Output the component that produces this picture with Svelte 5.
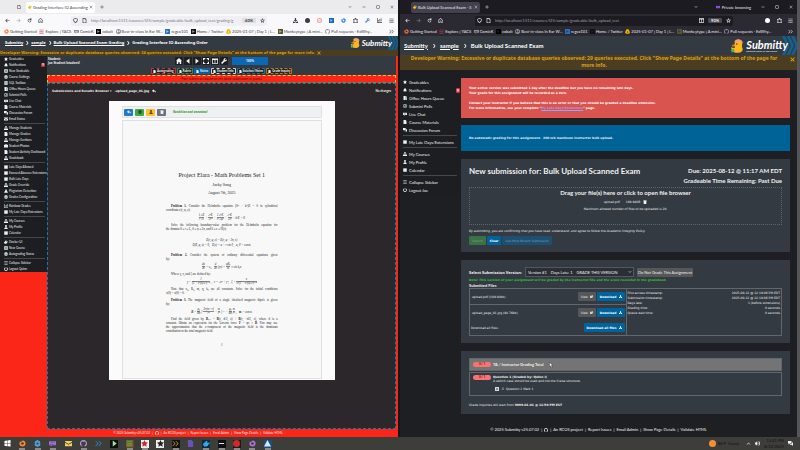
<script>
  const bookmarks = [
    { label: 'Getting Started', icon: 'fox', color: '#ff7139' },
    { label: 'Explore | YACS', icon: 'bars', color: '#c33a4a' },
    { label: 'ComicK', icon: 'chat', color: '#8a8f98' },
    { label: 'cobalt', icon: 'square', color: '#000000' },
    { label: 'Best-in-class In Ear W…', icon: 'globe', color: '#8a8f98' },
    { label: 'regex101', icon: 'square', color: '#2271c8' },
    { label: 'Home / Twitter', icon: 'square', color: '#111111' },
    { label: '2025-01-07 | Day 1 | L…', icon: 'drive', color: '#f4b400' },
    { label: 'Monkeytype | A mini…', icon: 'square', color: '#5b5330' },
    { label: 'Pull requests · ExWhy…', icon: 'github', color: '#8a8f98' }
  ];

  const graderMenu = [
    [
      ['star', 'Gradeables'],
      ['bell', 'Notifications', '9'],
      ['plus', 'New Gradeable'],
      ['gear', 'Course Settings'],
      ['db', 'SQL Toolbox'],
      ['door', 'Office Hours Queue'],
      ['poll', 'Submini Polls'],
      ['chat', 'Live Chat'],
      ['file', 'Course Materials'],
      ['comments', 'Discussion Forum'],
      ['mail', 'Email Status']
    ],
    [
      ['users', 'Manage Students'],
      ['file', 'Manage Graders'],
      ['users', 'Manage Sections'],
      ['camera', 'Student Photos'],
      ['file', 'Student Activity Dashboard'],
      ['users', 'Gradebook']
    ],
    [
      ['calendar', 'Late Days Allowed'],
      ['calendar', 'Excused Absence Extensions'],
      ['calendar', 'Bulk Late Days'],
      ['users', 'Grade Override'],
      ['warn', 'Plagiarism Detection'],
      ['gear', 'Grades Configuration']
    ],
    [
      ['chart', 'Rainbow Grades'],
      ['calendar', 'My Late Days/Extensions']
    ],
    [
      ['users', 'My Courses'],
      ['user', 'My Profile'],
      ['calendar', 'Calendar']
    ],
    [
      ['docker', 'Docker UI'],
      ['plus', 'New Course'],
      ['gear', 'Autograding Status']
    ],
    [
      ['bars', 'Collapse Sidebar'],
      ['power', 'Logout Quinn']
    ]
  ];

  const studentMenu = [
    [
      ['star', 'Gradeables'],
      ['bell', 'Notifications', '9'],
      ['door', 'Office Hours Queue'],
      ['poll', 'Submini Polls'],
      ['chat', 'Live Chat'],
      ['file', 'Course Materials'],
      ['comments', 'Discussion Forum']
    ],
    [['calendar', 'My Late Days/Extensions']],
    [
      ['users', 'My Courses'],
      ['user', 'My Profile'],
      ['calendar', 'Calendar']
    ],
    [
      ['bars', 'Collapse Sidebar'],
      ['power', 'Logout Joe']
    ]
  ];

  const icons = {
    star: 'M8 0l2.4 5.2 5.6.7-4.1 3.9 1.1 5.7L8 12.7l-5 2.8 1.1-5.7L0 5.900l5.600-.7z',
    bell: 'M7 0h2v2c3 .6 4 3 4 6l2 4v1H1v-1l2-4c0-3 1-5.400 4-6zM6 14h4l-2 2z',
    plus: 'M1 1h14v14H1zM7 4v3H4v2h3v3h2V9h3V7H9V4z',
    gear: 'M6 0h4v3l3-1 2 4-2 2 2 2-2 4-3-1v3H6v-3l-3 1-2-4 2-2-2-2 2-4 3 1zM8 5.500a2.500 2.500 0 100 5 2.500 2.500 0 000-5z',
    db: 'M1 1h14v4H1zM1 6h14v4H1zM1 11h14v4H1z',
    door: 'M2 0h9v16H2zM12 2h3v14h-3z',
    poll: 'M8 0a8 8 0 100 16A8 8 0 008 0zM8 2a6 6 0 110 12A6 6 0 018 2zM5 7h2v5H5zM9 4h2v8H9z',
    chat: 'M0 3h16v9H8l-4 3v-3H0zM3 6v1h10V6zM3 9v1h7V9z',
    file: 'M2 0h8l4 4v12H2z',
    comments: 'M0 0h11v8H5l-3 3V8H0zM12 5h4v8h-1v3l-3-3H6v-3h6z',
    mail: 'M0 2h16v2L8 9 0 4zM0 6l8 5 8-5v8H0z',
    users: 'M8 0a3 3 0 100 7 3 3 0 000-7zM3 6a2 2 0 100 4zM13 6v4a2 2 0 000-4zM0 11h4l4-3 4 3h4v5H0z',
    user: 'M8 0a4 4 0 100 8 4 4 0 000-8zM1 16c0-9 14-9 14 0z',
    camera: 'M0 3h4l2-2h4l2 2h4v11H0z',
    calendar: 'M3 0h2v2h6V0h2v2h2v13H1V2h2z',
    warn: 'M8 0l8 15H0z',
    chart: 'M0 0h2v13h14v2H0zM4 6h2v5H4zM8 3h2v8H8zM12 1h2v10h-2z',
    docker: 'M0 8h3V5h3V2h4v5h2l2-2 2 2c-1 2-2 2-3 2-1 4-4 6-7 6-4 0-6-2-6-7z',
    bars: 'M1 2h14v2H1zM1 7h14v2H1zM1 12h14v2H1z',
    power: 'M7 0h2v7H7zM4 2l1 2a5 5 0 106 0l1-2a7.500 7.500 0 11-8 0z',
    fox: 'M8 1c5 0 7 3 7 7s-3 7-7 7-7-3-7-7l1-5 2 2zM8 5a3 3 0 100 6 3 3 0 000-6z',
    square: 'M0 0h16v16H0zM5 4v8h2V9h4V7H7V4z',
    globe: 'M8 0a8 8 0 100 16A8 8 0 008 0zM3 4l4 1 1 3-2 4-3-3zM10 3l3 3-1 4-2-2z',
    drive: 'M5 1h6l5 9-3 5H3l-3-5zM8 6l-2.500 5h5z',
    github: 'M8 0a8 8 0 00-2.500 15.600v-2c-3 .4-3-2-3-2l2 1 1-1c-4-1-3-5-2-6V3l2.500 1h4L12.500 3v2.600c1 1 2 5-2 6v4A8 8 0 008 0z',
    back: 'M7 2l1.500 1.500L5 7h10v2H5l3.500 3.500L7 14 1 8z',
    forward: 'M9 2L7.500 3.500 11 7H1v2h10l-3.500 3.500L9 14l6-6z',
    reload: 'M8 2l3 1V1h3v6H8V5h2a4 4 0 102 4h2A6 6 0 118 2z',
    house: 'M8 0l8 7h-2v9h-4v-5H6v5H2V7H0z',
    houseLine: 'M8 0l7 6v9H9v-5H7v5H1V6zM8 2.500L2.700 7v6.300H5.500V8.500h5v4.800h2.800V7z',
    shield: 'M8 0l7 3c0 6-1 10-7 13C2 13 1 9 1 3zM8 2.200L3 4.300c.2 4 1 7 5 9.400 4-2.400 4.800-5.400 5-9.400z',
    page: 'M2 0h8l4 4v12H2zM4 2v12h8V5H9V2z',
    starLine: 'M8 0l2.400 5.200 5.600.7-4.100 3.900 1.100 5.700L8 12.700l-5 2.800 1.100-5.700L0 5.900l5.600-.7zM8 4L6.700 6.900l-3 .3L6 9.300l-.6 3L8 10.700l2.600 1.600-.6-3 2.300-2.100-3-.3z',
    down: 'M2 5l6 6 6-6-1-1-5 5-5-5z',
    up: 'M2 11l6-6 6 6-1 1-5-5-5 5z',
    angle: 'M4 0h4l6 8-6 8H4l6-8z',
    close: 'M2 3l1-1 5 5 5-5 1 1-5 5 5 5-1 1-5-5-5 5-1-1 5-5z',
    cross: 'M1 3l2-2 5 5 5-5 2 2-5 5 5 5-2 2-5-5-5 5-2-2 5-5z',
    max: 'M2 2h12v12H2zM4 4v8h8V4z',
    min: 'M2 7h12v2H2z',
    add: 'M7 1h2v6h6v2H9v6H7V9H1V7h6z',
    prev: 'M12 1v14L3 8z',
    next: 'M4 1v14l9-7z',
    expand: 'M0 0h6v3H3v3H0zM10 0h6v6h-3V3h-3zM0 10h3v3h3v3H0zM13 10h3v6h-6v-3h3z',
    table: 'M0 1h16v14H0zM2 5v8h5V5zM9 5v8h5V5z',
    wrench: 'M15 3l-3 3-2-2 3-3c-4-2-7 1-6 5L0 13l3 3 7-7c4 1 7-2 5-6z',
    reply: 'M7 1v4c6 0 9 4 8 10-2-4-4-5-8-5v4L0 7z',
    download: 'M6 0h4v6h4l-6 6-6-6h4zM0 11h3l5 4 5-4h3v5H0z',
    view: 'M4 1h12v8h-3v5H0V6h4zM6 3v3h7V3z',
    trash: 'M1 1h4l1-1h4l1 1h4v2H1zM2 4h12l-1 12H3z',
    puzzle: 'M5 3a3 3 0 016 0h4v4a3 3 0 000 5v4H1v-4a3 3 0 000-5V3zM4 5v9h8V5z',
    dot: 'M8 0a8 8 0 100 16A8 8 0 008 0z',
    mask: 'M0 3l8 2 8-2c0 7-1 11-5 11L8 11l-3 3C1 14 0 10 0 3zM3 7l2 3 2-2zM13 7l-2 3-2-2z',
    more: 'M1 3l1-1 6 6-6 6-1-1 5-5zM8 3l1-1 6 6-6 6-1-1 5-5z',
    win: 'M1 2l6-1v6H1zM8 1l7-1v7H8zM1 8h6v6l-6-1zM8 8h7v7l-7-1z',
    sound: 'M0 5h3l4-4v14l-4-4H0zM9 4c3 1 3 7 0 8zM12 1c6 3 6 11 0 14l-1-1c4-3 4-9 0-12z'
  };

  const taskIcons = [
    { icon: 'win', fg: '#ffffff' },
    { icon: 'fox', fg: '#ff8a2a', open: true },
    { icon: 'gear', fg: '#4aa3e0', open: true },
    { icon: 'chat', fg: '#a06be0', open: true },
    { icon: 'mail', fg: '#f3cf5b' },
    { icon: 'github', fg: '#b891e8', open: true },
    { icon: 'more', fg: '#2b9ae6' },
    { icon: 'next', fg: '#9be59b', bg: '#0d0f0d' },
    { icon: 'db', fg: '#6f8f35', bg: '#6b4427', open: true },
    { icon: 'star', fg: '#c22c2c', bg: '#eeeeee', open: true },
    { icon: 'star', fg: '#222222', bg: '#eeeeee' },
    { icon: 'more', fg: '#e8a52c', bg: '#111111', open: true },
    { icon: 'file', fg: '#6a51b5' },
    { icon: 'docker', fg: '#33aaf0', bg: '#10293f', open: true },
    { icon: 'min', fg: '#ffffff', bg: '#101010', open: true },
    { icon: 'dot', fg: '#d32626', bg: '#1b1b1b', open: true },
    { icon: 'fox', fg: '#b56fe0', open: true },
    { icon: 'warn', fg: '#d6ecff', bg: '#1b4c86', open: true }
  ];

  const graderTabs = [
    ['Autograding', 'red'],
    ['Rubric', 'green'],
    ['Notes', 'fill'],
    ['Student Info', 'white'],
    ['Solution/Notes', 'blue'],
    ['Grade Inquiry', 'orange']
  ];

  const details = [
    ['First access timestamp:', '2025-08-12 @ 12:19:06 PM EDT'],
    ['Submission timestamp:', '2025-08-12 @ 12:19:06 PM EDT'],
    ['Days late:', '1 (before extensions)'],
    ['Grading time:', '0 seconds'],
    ['Queue wait time:', '0 seconds']
  ];

  const footerLinks = ['An RCOS project', 'Report Issues', 'Email Admin', 'Show Page Details', 'Validate HTML'];
</script>

{#snippet icon(name, color = 'currentColor')}
  <svg class="icon" viewBox="0 0 16 16" aria-hidden="true">
    <path d={icons[name]} fill={color} fill-rule="evenodd" />
  </svg>
{/snippet}

{#snippet browser(title, url, zoom, isPrivate)}
  <header class="browser">
    <div class="tabs">
      {#if !isPrivate}
        <span class="pinned">{@render icon('page')}</span>
      {/if}
      <button class="tab">
        {@render icon('docker', '#fdb515')}
        <span class="tab-title">{title}</span>
        {@render icon('close')}
      </button>
      <button class="plain" aria-label="New tab">{@render icon('add')}</button>
      <div class="window-controls">
        <button class="plain" aria-label="List tabs">{@render icon('down')}</button>
        {#if isPrivate}
          <span class="private">{@render icon('mask', '#a05cff')} Private browsing</span>
        {/if}
        <button class="plain" aria-label="Minimize">{@render icon('min')}</button>
        <button class="plain" aria-label="Maximize">{@render icon('max')}</button>
        <button class="plain" aria-label="Close">{@render icon('close')}</button>
      </div>
    </div>
    <div class="toolbar">
      <div class="nav-buttons">
        <button class="plain" aria-label="Back">{@render icon('back')}</button>
        <button class="plain faded" aria-label="Forward">{@render icon('forward')}</button>
        <button class="plain" aria-label="Reload">{@render icon('reload')}</button>
        <button class="plain" aria-label="Home">{@render icon('houseLine')}</button>
      </div>
      <div class="url-bar">
        {@render icon('shield')}
        {@render icon('page')}
        <input type="text" aria-label="Address" value={url} />
        {#if isPrivate}{@render icon('table')}{/if}
        <span class="zoom">{zoom}</span>
        {@render icon('starLine')}
      </div>
      <div class="extensions">
        {#if isPrivate}
          {@render icon('dot', '#ffffff')}
          {@render icon('puzzle')}
        {:else}
          {@render icon('download')}
          {@render icon('dot', '#3c3c44')}
          {@render icon('poll', '#f08a8a')}
          {@render icon('square', '#1769c5')}
          {@render icon('fox', '#2580d8')}
          {@render icon('puzzle')}
          {@render icon('wrench', '#4b86d8')}
          {@render icon('chart')}
        {/if}
        {@render icon('bars')}
      </div>
    </div>
    <nav class="bookmarks">
      {#each bookmarks as mark}
        <a href="#bookmark">{@render icon(mark.icon, mark.color)}{mark.label}</a>
      {/each}
      <span class="overflow">{@render icon('more')}</span>
    </nav>
  </header>
{/snippet}

{#snippet logo()}
  <div class="logo">
    <svg class="duck" viewBox="0 0 44 44" aria-hidden="true">
      <path d="M14 14a11 11 0 0122 1c0 5-1 6-1 9 6 9 0 18-12 18C9 42 3 36 4 25c4 3 8 4 11 1-2-4-3-8-1-12z" fill="#fdb71a" />
      <path d="M12 11C16 0 32-2 39 13c-7-3-17-5-27-2z" fill="#f39a93" />
      <path d="M14 17l-8 2c-2 4 3 6 9 4z" fill="#f27a1a" />
      <circle cx="20" cy="16" r="2" fill="#222222" />
      <path d="M2 34l8-4 4 6-8 6z" fill="#2eb574" />
    </svg>
    <span class="wordmark">Submitty<small>Rensselaer Center for Open Source</small></span>
    <svg class="chevrons" viewBox="0 0 30 40" preserveAspectRatio="none" aria-hidden="true">
      <path d="M0 0h6l9 20-9 20H0l9-20zM9 0h6l9 20-9 20H9l9-20zM18 0h6l6 14v12l-6 14h-6l9-20z" fill="#12618f" />
    </svg>
  </div>
{/snippet}

{#snippet sidebar(groups)}
  <nav class="sidebar">
    {#each groups as group}
      <ul>
        {#each group as [name, label, badge]}
          <li>
            <a href="#menu">{@render icon(name)}{label}</a>
            {#if badge}<span class="badge">{badge}</span>{/if}
          </li>
        {/each}
      </ul>
    {/each}
  </nav>
{/snippet}

{#snippet footer()}
  <footer class="site-footer">
    <span>© 2025 Submitty v25.07.02</span><i>|</i>
    {@render icon('github')}
    {#each footerLinks as link}
      <i>|</i><a href="#footer">{link}</a>
    {/each}
  </footer>
{/snippet}

{#snippet frac(top, bottom)}
  <span class="frac"><span>{top}</span><span>{bottom}</span></span>
{/snippet}

<div class="desktop">
  <section class="window grader">
    {@render browser('Grading Interface IO Ascending', 'http://localhost:1511/courses/f25/sample/gradeable/bulk_upload_test/grading/g', '60%', false)}
    <div class="site-header">
      <nav class="crumbs">
        <a href="#home">Submitty</a>{@render icon('angle')}
        <a href="#course">sample</a>{@render icon('angle')}
        <a href="#exam">Bulk Upload Scanned Exam Grading</a>{@render icon('angle')}
        <span>Grading Interface IO Ascending Order</span>
      </nav>
      {@render logo()}
    </div>
    <div class="warning">
      <p>Developer Warning: Excessive or duplicate database queries observed: 34 queries executed. Click "Show Page Details" at the bottom of the page for more info.</p>
      {@render icon('cross')}
    </div>
    <div class="site-body">
      {@render sidebar(graderMenu)}
      <main class="grading">
        <div class="grading-top">
          <p class="student">Student:<br />Joe Student [student]</p>
          <div class="grading-tools">
            <div class="tool-row">
              {#each ['house', 'prev', 'next', 'expand', 'table', 'wrench'] as name}
                <button class="tool" aria-label={name}>{@render icon(name)}</button>
              {/each}
              <div class="progress">100%</div>
            </div>
            <div class="tab-row">
              {#each graderTabs as [label, tone]}
                <button class="pill {tone}">{@render icon('file')}{label}</button>
              {/each}
            </div>
          </div>
        </div>
        <div class="notice">Peer rubrics are based on the latest submission or points</div>
        <div class="browser-panel">
          <div class="panel-title">
            <strong>Submissions and Results Browser ▾</strong>
            <strong class="filename">.upload_page_01.jpg</strong>
            {@render icon('reply')}
            <small>No changes</small>
          </div>
          <div class="viewer">
            <div class="viewer-bar">
              <button class="act blue" aria-label="Save">{@render icon('reply')}</button>
              <button class="act green" aria-label="Rotate">{@render icon('gear')}</button>
              <button class="act yellow" aria-label="Pen">{@render icon('user')}</button>
              <button class="act gray" aria-label="Clear">{@render icon('trash')}</button>
              <em>Rendition and annotate!</em>
            </div>
            <article class="paper">
              <h1>Project Elara - Math Problems Set 1</h1>
              <p class="byline">Jacky Song</p>
              <p class="byline">August 7th, 2025</p>

              <div class="para">
                <p class="full indent"><b>Problem 1.</b> Consider the Helmholtz equation (∇² + k²)E = 0 in cylindrical</p>
                <p>coordinates (r, φ, z):</p>
              </div>
              <div class="math">
                {@render frac('1 ∂E', 'r ∂r')} + {@render frac('∂²E', '∂r²')} + {@render frac('1 ∂²E', 'r² ∂φ²')} + {@render frac('∂²E', '∂z²')} + k²E = 0
              </div>
              <div class="para">
                <p class="full indent">Solve the following boundary-value problem for the Helmholtz equation for</p>
                <p>the domain 0 ≤ r ≤ L, 0 ≤ φ ≤ 2π, and 0 ≤ z ≤ H(r):</p>
              </div>
              <div class="math two-line">
                <p>E(r, φ, z) = E(r, φ + 2π, z)</p>
                <p>E(R, φ, z) = 0,&nbsp;&nbsp; E(z) = a + r sin θ,&nbsp;&nbsp; a, θ = const.</p>
              </div>
              <div class="para">
                <p class="full indent"><b>Problem 2.</b> Consider the system of ordinary differential equations given</p>
                <p>by:</p>
              </div>
              <div class="math">
                {@render frac('dx', 'dt')} = v₀,&nbsp;&nbsp; {@render frac('d', 'dt')}(γv) = {@render frac('qB₀', 'm')} v sin k₀x
              </div>
              <div class="para">
                <p class="indent">Where γ, v, and ξ are defined by:</p>
              </div>
              <div class="math">
                γ = {@render frac('1', '(1 − v²(t)/c²)¹ᐟ²')} ,&nbsp;&nbsp; v = √x² + y²,&nbsp;&nbsp; ξ = {@render frac('x', 'c²(1 − v²(t)/c²)³ᐟ²')}
              </div>
              <div class="para">
                <p class="full indent">Note that v₀, B₀, m, q, k₀ are all constants. Solve for the initial conditions</p>
                <p>x(0) = z(0) = 0.</p>
              </div>
              <div class="para spaced">
                <p class="full indent"><b>Problem 3.</b> The magnetic field of a single idealized magnetic dipole is given</p>
                <p>by:</p>
              </div>
              <div class="math">
                <b>B</b> = {@render frac('μ₀', '4π')} [ {@render frac('3r(m · r)', 'r⁵')} − {@render frac('m', 'r³')} ] = −{@render frac('μ₀', '4π')} {@render frac('m', 'r³')} ,&nbsp;&nbsp; <b>m</b> = const.
              </div>
              <div class="para">
                <p class="full indent">Find the field given by <b>B</b>ₙₑₜ = <b>B</b>(r, d/2, z) + <b>B</b>(r, −d/2, z), where d is a</p>
                <p class="full">constant. Obtain an expression for the Lorentz force <b>F</b> = qv × <b>B</b>. You may use</p>
                <p class="full">the approximation that the z-component of the magnetic field is the dominant</p>
                <p>contribution to the total magnetic field.</p>
              </div>
              <p class="page-number">1</p>
            </article>
          </div>
        </div>
        {@render footer()}
      </main>
    </div>
  </section>

  <section class="window student-view">
    {@render browser('Bulk Upload Scanned Exam - S', 'http://localhost:1511/courses/f25/sample/gradeable/bulk_upload_test', '90%', true)}
    <div class="site-header">
      <nav class="crumbs">
        <a href="#home">Submitty</a>{@render icon('angle')}
        <a href="#course">sample</a>{@render icon('angle')}
        <span>Bulk Upload Scanned Exam</span>
      </nav>
      {@render logo()}
    </div>
    <div class="warning">
      <p>Developer Warning: Excessive or duplicate database queries observed: 29 queries executed. Click "Show Page Details" at the bottom of the page for more info.</p>
      {@render icon('cross')}
    </div>
    <div class="site-body">
      {@render sidebar(studentMenu)}
      <main class="submission">
        <div class="alert danger">
          <p>Your active version was submitted 1 day after the deadline but you have no remaining late days.</p>
          <p>Your grade for this assignment will be recorded as a zero.</p>
          <p class="gap">Contact your instructor if you believe that this is an error or that you should be granted a deadline extension.</p>
          <p>For more information, see your complete "<a href="#late">My Late Days/Extensions</a>" page.</p>
        </div>
        <div class="alert info">
          <p>No automatic grading for this assignment.&nbsp; 200 mb maximum instructor bulk upload.</p>
        </div>

        <section class="card upload">
          <div class="upload-head">
            <h1>New submission for: Bulk Upload Scanned Exam</h1>
            <div class="due">
              <p>Due: 2025-08-12 @ 11:17 AM EDT</p>
              <p>Gradeable Time Remaining: Past Due</p>
            </div>
          </div>
          <div class="dropzone">
            <h2>Drag your file(s) here or click to open file browser</h2>
            <p class="file"><span>upload.pdf</span><span>109.94KB</span>{@render icon('trash')}</p>
            <p>Maximum allowed number of files to be uploaded is 20.</p>
          </div>
          <p class="agree">By submitting, you are confirming that you have read, understand, and agree to follow the Academic Integrity Policy.</p>
          <div class="actions">
            <button class="btn success">Submit</button>
            <button class="btn primary">Clear</button>
            <button class="btn dim">Use Most Recent Submission</button>
          </div>
        </section>

        <section class="card version">
          <div class="version-row">
            <label for="version">Select Submission Version:</label>
            <div class="select">
              <select id="version">
                <option>Version #1 &nbsp;&nbsp; Days Late: 1 &nbsp;&nbsp; GRADE THIS VERSION</option>
              </select>
              {@render icon('down')}
            </div>
            <button class="btn secondary">Do Not Grade This Assignment</button>
          </div>
          <p class="note">Note: This version of your assignment will be graded by the instructor/TAs and the score recorded in the gradebook.</p>
          <h3>Submitted Files</h3>
          <div class="files">
            <div class="file-list">
              <div class="file-row">
                <span>.upload.pdf (109.94kb)</span>
                <button class="btn secondary">View {@render icon('view')}</button>
                <button class="btn primary">Download {@render icon('download')}</button>
              </div>
              <div class="file-row">
                <span>.upload_page_01.jpg (94.76kb)</span>
                <button class="btn secondary">View {@render icon('view')}</button>
                <button class="btn primary">Download {@render icon('download')}</button>
              </div>
              <div class="file-row">
                <span>Download all files:</span>
                <button class="btn primary">Download all files {@render icon('download')}</button>
              </div>
            </div>
            <dl>
              {#each details as [term, value]}
                <div><dt>{term}</dt><dd>{value}</dd></div>
              {/each}
            </dl>
          </div>
        </section>

        <section class="card grades">
          <div class="total">
            <span class="score">0 / 1</span>
            <strong>TA / Instructor Grading Total</strong>
            <svg class="cursor" viewBox="0 0 10 16" aria-hidden="true">
              <path d="M1 1v12l3-3 2 5 2-1-2-5h4z" fill="#ffffff" stroke="#222222" />
            </svg>
          </div>
          <div class="question">
            <span class="score">0 / 1</span>
            <div>
              <strong>Question 1 (Graded by: Quinn I)</strong>
              <p>A switch case should be used and not the if-else structure.</p>
              <label class="mark"><input type="checkbox" checked /> -5&nbsp; Question 1 Mark 1</label>
            </div>
          </div>
          <p class="inquiry">Grade inquiries will start from <b>9999-01-01 @ 11:59 PM EST</b></p>
        </section>
        {@render footer()}
      </main>
    </div>
  </section>

  <footer class="taskbar">
    <div class="apps">
      {#each taskIcons as app}
        <button class="app" class:open={app.open} style:background={app.bg} aria-label="Application">
          {@render icon(app.icon, app.fg)}
        </button>
      {/each}
    </div>
    <div class="tray">
      <span class="weather">{@render icon('dot', '#f5912c')} 86°F&nbsp; Sunny</span>
      {@render icon('up')}
      {@render icon('sound')}
      <time>12:21 PM<br />8/12/2025</time>
      {@render icon('comments')}
    </div>
  </footer>
</div>

<style>
  :global(body) {
    background: #1d1e22;
  }

  .desktop {
    display: grid;
    grid-template-columns: 398fr 402fr;
    grid-template-rows: minmax(0, 1fr) auto;
    height: 100vh;
    overflow: hidden;
    font: 3px/4px 'Noto Sans', sans-serif;
    color: #f0f0f0;
  }

  p,
  h1,
  h2,
  h3,
  ul,
  dl,
  dd {
    margin: 0;
    padding: 0;
    list-style: none;
  }

  button,
  input,
  select {
    box-sizing: border-box;
    margin: 0;
    padding: 0;
    border: 0;
    font: inherit;
    color: inherit;
    background: none;
  }

  a {
    color: inherit;
    text-decoration: none;
  }

  .icon {
    flex: none;
    width: 4px;
    height: 4px;
  }

  .window {
    display: flex;
    flex-direction: column;
    min-width: 0;
    min-height: 0;
    overflow: hidden;
  }

  .student-view {
    border-left: 2px solid #17171a;
    border-right: 3px solid #55565a;
    background: #1d1f23;
  }

  /* browser chrome */
  .browser {
    flex: none;
    font: 4px/5px Lato, sans-serif;
    color: #3c3c44;
    background: #f9f9fb;
  }

  .tabs {
    display: flex;
    align-items: center;
    gap: 5px;
    height: 14px;
    padding: 0 4px 0 17px;
    background: #ebebee;
  }

  .student-view .tabs {
    padding-left: 11px;
  }

  .pinned {
    display: flex;
  }

  .tab {
    display: flex;
    align-items: center;
    gap: 1px;
    min-width: 69px;
    height: 11px;
    padding: 0 2px;
    border-radius: 2px;
    background: #ffffff;
  }

  .tab-title {
    flex: 1;
    white-space: nowrap;
    text-align: left;
  }

  .plain {
    display: flex;
  }

  .window-controls {
    display: flex;
    align-items: center;
    gap: 10px;
    margin-left: auto;
  }

  .private {
    display: flex;
    align-items: center;
    gap: 2px;
    margin-left: 8px;
    white-space: nowrap;
  }

  .toolbar {
    display: flex;
    align-items: center;
    height: 13px;
    padding: 0 4px 0 5px;
  }

  .toolbar .icon {
    width: 5px;
    height: 5px;
  }

  .nav-buttons {
    display: flex;
    gap: 6px;
    width: 66px;
  }

  .student-view .nav-buttons {
    width: 70px;
  }

  .faded {
    opacity: 0.4;
  }

  .url-bar {
    display: flex;
    align-items: center;
    gap: 4px;
    flex: 1;
    min-width: 0;
    height: 10px;
    padding: 0 2px;
    border-radius: 2px;
    background: #f0f0f4;
  }

  .url-bar input {
    flex: 1;
    min-width: 0;
    height: 8px;
    color: #77777f;
  }

  .student-view .url-bar input {
    color: #a0a0a8;
  }

  .zoom {
    padding: 0 3px;
    border-radius: 1px;
    font-weight: bold;
    background: #dedee3;
  }

  .extensions {
    display: flex;
    justify-content: space-between;
    align-items: center;
    width: 101px;
    margin-left: 26px;
  }

  .student-view .extensions {
    width: 28px;
    margin-left: 32px;
  }

  .bookmarks {
    display: flex;
    align-items: center;
    justify-content: space-between;
    height: 9px;
    padding: 0 4px;
    white-space: nowrap;
  }

  .bookmarks a {
    display: flex;
    align-items: center;
    gap: 1px;
  }

  .bookmarks .icon {
    width: 5px;
    height: 5px;
  }

  .overflow {
    display: flex;
    margin-left: 14px;
  }

  .student-view .browser {
    color: #e8e8ec;
    background: #2b2a33;
  }

  .student-view .tabs {
    background: #1c1b22;
  }

  .student-view .tab {
    background: #42414d;
  }

  .student-view .url-bar {
    background: #1c1b22;
  }

  .student-view .zoom {
    background: #4a4954;
  }

  /* submitty header */
  .site-header {
    display: flex;
    flex: none;
    align-items: center;
    justify-content: space-between;
    height: 14px;
    padding-left: 5px;
    font: bold 4px/6px 'Noto Sans', sans-serif;
    color: #ffffff;
    background: #343a42;
  }

  .student-view .site-header {
    height: 19px;
    padding-left: 4px;
    font: bold 6px/8px Lato, sans-serif;
  }

  .crumbs {
    display: flex;
    align-items: center;
    gap: 2px;
    white-space: nowrap;
  }

  .student-view .crumbs {
    gap: 4px;
  }

  .crumbs a {
    text-decoration: underline;
  }

  .logo {
    position: relative;
    display: flex;
    align-items: center;
    gap: 1px;
    height: 100%;
    padding-right: 6px;
  }

  .duck {
    width: 11px;
    height: 12px;
  }

  .wordmark {
    position: relative;
    z-index: 1;
    font: italic bold 8px/9px Lato, sans-serif;
  }

  .wordmark small {
    display: none;
    font: 2px/2px Lato, sans-serif;
  }

  .chevrons {
    position: absolute;
    top: 0;
    right: 0;
    width: 10px;
    height: 100%;
  }

  .student-view .logo {
    padding-right: 9px;
  }

  .student-view .duck {
    width: 15px;
    height: 16px;
  }

  .student-view .wordmark {
    font-size: 11px;
    line-height: 11px;
  }

  .student-view .wordmark small {
    display: block;
  }

  .student-view .chevrons {
    width: 15px;
  }

  .warning {
    display: flex;
    flex: none;
    align-items: center;
    gap: 2px;
    height: 6px;
    font: bold 4px/6px 'Noto Sans', sans-serif;
    color: #d9a01e;
    background: #4b3d22;
    white-space: nowrap;
  }

  .student-view .warning {
    align-items: flex-start;
    height: 15px;
    padding-right: 2px;
    font-size: 5px;
    line-height: 7px;
    text-align: center;
    white-space: normal;
  }

  .student-view .warning p {
    flex: 1;
    padding: 0 8px;
  }

  .student-view .warning .icon {
    width: 5px;
    height: 5px;
    margin-top: 2px;
  }

  .site-body {
    display: flex;
    flex: 1;
    min-height: 0;
  }

  /* sidebar */
  .sidebar {
    flex: none;
    align-self: flex-start;
    box-sizing: border-box;
    width: 47px;
    padding: 0 2px 0 4px;
    font: 3px/4px Lato, sans-serif;
    background: #1c1e22;
  }

  .sidebar ul + ul {
    margin-top: 1px;
    padding-top: 1px;
    border-top: 1px solid #45474b;
  }

  .sidebar li {
    display: flex;
    align-items: center;
    justify-content: space-between;
    height: 6px;
  }

  .sidebar a {
    display: flex;
    align-items: center;
    gap: 1px;
    white-space: nowrap;
  }

  .badge {
    padding: 0 1px;
    border-radius: 1px;
    font-weight: bold;
    background: #c9303e;
  }

  .student-view .sidebar {
    width: 60px;
    padding: 8px 0 0 3px;
    font: 4px/5px Lato, sans-serif;
  }

  .student-view .sidebar ul + ul {
    margin: 1px 3px 0 0;
    padding-top: 2px;
  }

  .student-view .sidebar li {
    height: 8px;
  }

  .student-view .sidebar a {
    gap: 2px;
  }

  /* grading interface */
  .grader {
    background: #fb2617;
  }

  .grading {
    display: flex;
    flex: 1;
    flex-direction: column;
    min-width: 0;
    padding-right: 2px;
  }

  .grading-top {
    display: flex;
    box-sizing: border-box;
    height: 19px;
    padding-top: 1px;
    background: #343a42;
  }

  .student {
    width: 103px;
    padding-left: 1px;
    font-weight: bold;
  }

  .grading-tools {
    display: flex;
    flex-direction: column;
    gap: 3px;
  }

  .tool-row {
    display: flex;
    gap: 1px;
    padding-left: 24px;
  }

  .tool {
    display: grid;
    place-items: center;
    width: 8px;
    height: 8px;
    border-radius: 1px;
    background: #1c1e22;
  }

  .tool .icon {
    width: 6px;
    height: 6px;
  }

  .progress {
    width: 36px;
    margin-left: 3px;
    font-weight: bold;
    line-height: 8px;
    text-align: center;
    background: #0a68b4;
  }

  .tab-row {
    display: flex;
    gap: 1px;
    font: bold 3px/4px Lato, sans-serif;
  }

  .pill {
    display: flex;
    align-items: center;
    gap: 1px;
    height: 6px;
    padding: 0 1px;
    border: 1px dashed;
    border-radius: 1px;
    white-space: nowrap;
    background: #22262b;
  }

  .pill .icon {
    width: 3px;
    height: 3px;
  }

  .pill.red {
    border-color: #c9303e;
  }

  .pill.green {
    border-color: #37864b;
  }

  .pill.fill {
    border-color: #0a68b4;
    background: #0a5a9a;
  }

  .pill.white {
    border-color: #d0d0d0;
  }

  .pill.blue {
    border-color: #1b6f8f;
  }

  .pill.orange {
    border-color: #b77416;
  }

  .notice {
    border: 1px dashed #e3c52c;
    border-bottom-color: #4d9f3c;
    line-height: 6px;
    text-align: center;
    color: #3c0a0a;
  }

  .browser-panel {
    flex: 1;
    min-height: 0;
    border: 1px dashed #167ab8;
    background: #2c272a;
  }

  .panel-title {
    display: flex;
    align-items: center;
    gap: 3px;
    height: 14px;
    padding: 0 4px 3px;
    font: bold 3px/4px 'DejaVu Sans', sans-serif;
  }

  .panel-title small {
    margin-left: auto;
    font: bold 3px/4px Lato, sans-serif;
  }

  .viewer {
    box-sizing: border-box;
    width: 65%;
    margin-left: 61px;
    padding: 5px 13px 1px;
    background: #fbfbfb;
  }

  .viewer-bar {
    display: flex;
    align-items: center;
    gap: 2px;
    height: 10px;
    margin-bottom: 2px;
    padding: 0 1px;
    border: 1px solid #e0e1e4;
    background: #eff0f2;
  }

  .act {
    display: grid;
    place-items: center;
    width: 9px;
    height: 7px;
    border-radius: 1px;
  }

  .act.blue {
    background: #1f7bc8;
  }

  .act.green {
    color: #143d18;
    background: #40a845;
  }

  .act.yellow {
    color: #6a3a10;
    background: #fdbf2d;
  }

  .act.gray {
    background: #6b747c;
  }

  .viewer-bar em {
    margin-left: 5px;
    font-weight: bold;
    color: #2f9a2f;
  }

  .paper {
    height: 257px;
    padding: 0 43px;
    border: 1px solid #dfe0e1;
    font: 3px/4px 'Liberation Serif', serif;
    color: #222222;
    background: #f8f8f8;
  }

  .paper h1 {
    margin: 50px 0 2px;
    font: 6px/8px 'Liberation Serif', serif;
    text-align: center;
    white-space: nowrap;
  }

  .byline {
    font-size: 4px;
    line-height: 8px;
    text-align: center;
  }

  .byline + .para {
    padding-top: 7px;
  }

  .para p {
    white-space: nowrap;
  }

  .para .full {
    text-align-last: justify;
  }

  .para .indent {
    padding-left: 5px;
  }

  .para.spaced {
    padding-top: 3px;
  }

  .math {
    display: flex;
    align-items: center;
    justify-content: center;
    gap: 1px;
    height: 11px;
    font-style: italic;
    white-space: nowrap;
  }

  .math.two-line {
    flex-direction: column;
    height: 22px;
  }

  .frac {
    display: inline-flex;
    flex-direction: column;
    line-height: 3px;
    text-align: center;
  }

  .frac span + span {
    border-top: 1px solid #8a8a8a;
  }

  .page-number {
    line-height: 24px;
    text-align: center;
  }

  /* centred on the whole window, so it reaches back under the sidebar */
  .site-footer {
    display: flex;
    align-items: center;
    justify-content: center;
    gap: 2px;
    height: 8px;
    margin-left: -47px;
    font: 3px/4px Lato, sans-serif;
    white-space: nowrap;
  }

  .site-footer i {
    font-style: normal;
  }

  /* submission page */
  .submission {
    display: flex;
    flex: 1;
    flex-direction: column;
    gap: 8px;
    min-width: 0;
    padding: 8px 7px 0 1px;
    font-family: 'DejaVu Sans', sans-serif;
  }

  .alert {
    padding: 8px;
    font-weight: bold;
    line-height: 5px;
    color: #ffffff;
  }

  .alert .gap {
    margin-top: 5px;
  }

  .danger {
    padding-bottom: 7px;
    margin-bottom: -1px;
    background: #d9534f;
  }

  .danger a {
    color: #9aa0f5;
    text-decoration: underline;
  }

  .info {
    padding: 11px 8px 10px;
    color: #e0eef8;
    background: #006398;
  }

  .card {
    padding: 7px 8px;
    background: #343a42;
  }

  .upload-head {
    display: flex;
    justify-content: space-between;
    height: 21px;
    font: bold 6px/10px Lato, sans-serif;
    white-space: nowrap;
  }

  .upload-head h1 {
    font-size: 8px;
    line-height: 10px;
  }

  .due {
    text-align: right;
  }

  .dropzone {
    height: 36px;
    border: 1px dotted #5f656d;
    text-align: center;
    line-height: 6px;
  }

  .dropzone h2 {
    font: bold 6px/10px Lato, sans-serif;
  }

  .dropzone .file {
    display: flex;
    align-items: center;
    justify-content: center;
    gap: 3px;
    line-height: 8px;
  }

  .file span + span {
    margin-left: 3px;
  }

  .agree {
    padding: 4px 0 3px;
    font-style: italic;
  }

  .actions {
    display: flex;
    gap: 1px;
  }

  .btn {
    display: flex;
    align-items: center;
    justify-content: center;
    gap: 2px;
    height: 9px;
    padding: 0 3px;
    border-radius: 1px;
    white-space: nowrap;
  }

  .success {
    color: #7fa382;
    background: #3c7045;
  }

  .primary {
    font-weight: bold;
    color: #ffffff;
    background: #00639e;
  }

  .dim {
    color: #7f9db3;
    background: #1d4f70;
  }

  .secondary {
    background: #555759;
  }

  .version-row {
    display: flex;
    align-items: center;
    gap: 3px;
    font: 4px/5px Lato, sans-serif;
  }

  .version-row label {
    font: bold 4px/5px 'Noto Sans', sans-serif;
  }

  .version-row .btn {
    padding: 0 1px;
  }

  .select {
    display: grid;
    align-items: center;
    width: 109px;
  }

  .select > * {
    grid-area: 1 / 1;
  }

  .select .icon {
    justify-self: end;
    margin-right: 2px;
    pointer-events: none;
  }

  select {
    width: 100%;
    height: 10px;
    padding-left: 2px;
    border: 1px solid #54585e;
    background: #2b2f35;
    appearance: none;
  }

  .note {
    line-height: 6px;
    font-style: italic;
    font-weight: bold;
    color: #2fc42f;
    white-space: nowrap;
  }

  .version h3 {
    font: bold 4px/5px Lato, sans-serif;
  }

  .files {
    display: grid;
    grid-template-columns: 1fr 1fr;
    border: 1px solid #62676d;
  }

  .file-row {
    display: flex;
    align-items: center;
    gap: 1px;
    height: 15px;
    padding: 0 1px;
  }

  .file-row + .file-row {
    border-top: 1px solid #62676d;
  }

  .file-row:last-child {
    border-top: 0;
  }

  .file-row span {
    flex: 1;
  }

  .file-row .icon {
    width: 3px;
    height: 3px;
  }

  .files dl {
    padding: 2px 1px;
    border-left: 1px solid #62676d;
    line-height: 5px;
  }

  .files dl div {
    display: flex;
    justify-content: space-between;
  }

  .total,
  .question {
    display: flex;
    gap: 2px;
    padding: 0 3px;
    border: 1px solid #62676d;
  }

  .total {
    align-items: center;
    height: 11px;
    font: 4px/5px Lato, sans-serif;
    background: #747474;
  }

  .score {
    width: 18px;
    border-radius: 3px;
    font: bold 3px/5px 'Noto Sans', sans-serif;
    text-align: center;
    color: #7a1f1f;
    background: #fb7272;
  }

  .cursor {
    width: 4px;
    height: 6px;
    margin-left: 3px;
  }

  .question {
    margin-top: 1px;
    padding-top: 2px;
    padding-bottom: 2px;
  }

  .question .score {
    align-self: flex-start;
  }

  .question p {
    line-height: 5px;
  }

  .mark {
    display: flex;
    align-items: center;
    gap: 2px;
    height: 9px;
    padding-left: 2px;
  }

  .mark input {
    width: 4px;
    height: 4px;
    border: 1px solid #d8d8d8;
    background: #8c9096;
    appearance: none;
  }

  .inquiry {
    padding-top: 7px;
  }

  .submission .site-footer {
    height: 16px;
    margin-left: -54px;
    font: 4px/5px Lato, sans-serif;
  }

  /* taskbar */
  .taskbar {
    display: flex;
    grid-column: 1 / -1;
    align-items: center;
    justify-content: space-between;
    height: 13px;
    padding: 0 7px 0 3px;
    background: #3d3d3a;
  }

  .apps {
    display: flex;
    justify-content: space-between;
    width: 34%;
  }

  .app {
    display: grid;
    place-items: center;
    width: 8px;
    height: 8px;
  }

  .app .icon {
    width: 7px;
    height: 7px;
  }

  .app.open {
    box-shadow: 0 3px 0 -1px #8a8a88;
  }

  .tray {
    display: flex;
    align-items: center;
    gap: 4px;
    font: 4px/6px Lato, sans-serif;
  }

  .tray .icon {
    width: 5px;
    height: 5px;
  }

  .weather {
    display: flex;
    align-items: center;
    gap: 2px;
    margin-right: 3px;
    color: #111111;
  }

  .weather .icon {
    width: 7px;
    height: 7px;
  }

  .tray time {
    text-align: right;
    color: #111111;
  }
</style>
